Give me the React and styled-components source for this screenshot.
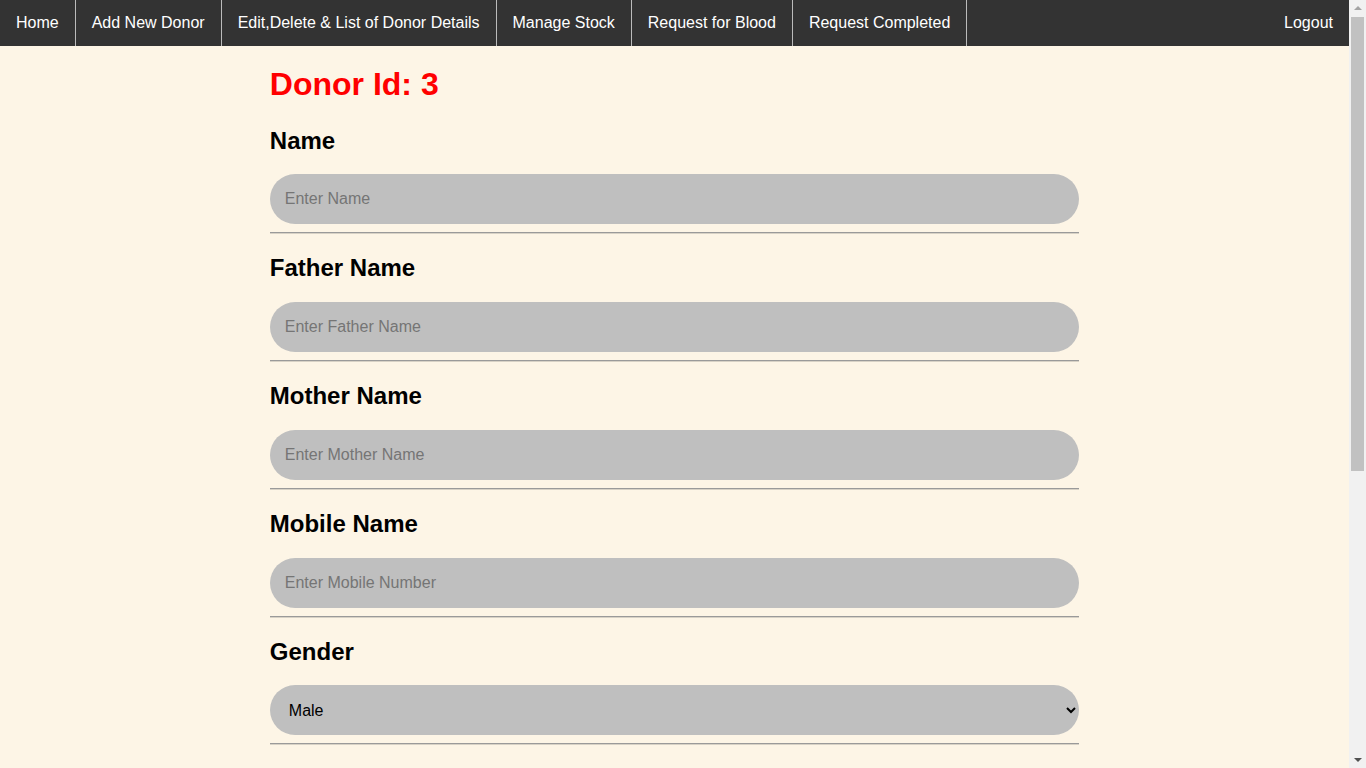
import React from "react";
import styled, { createGlobalStyle } from "styled-components";

const Global = createGlobalStyle`
  html, body { height: 100%; }
  body {
    margin: 0;
    background: #fdf5e6;
    font-family: "Liberation Sans", Arial, sans-serif;
    overflow: hidden;
  }
`;

const Shell = styled.div`
  display: flex;
  height: 100vh;
  overflow: hidden;
`;

const Page = styled.div`
  flex: 1;
  min-width: 0;
  overflow: hidden;
`;

const ScrollTrack = styled.div`
  width: 17px;
  flex: none;
  background: #f1f1f1;
  display: flex;
  flex-direction: column;
  align-items: center;
`;

const Arrow = styled.div`
  width: 0;
  height: 0;
  border-left: 4px solid transparent;
  border-right: 4px solid transparent;
  ${(p) =>
    p.$down
      ? "border-top: 4px solid #505050; margin-top: auto; margin-bottom: 6px;"
      : "border-bottom: 4px solid #a3a3a3; margin-top: 6px;"}
`;

const Thumb = styled.div`
  width: 13px;
  height: 454px;
  margin-top: 7px;
  background: #c1c1c1;
`;

const Nav = styled.ul`
  list-style: none;
  margin: 0;
  padding: 0;
  display: flex;
  background: #333;
`;

const NavItem = styled.li`
  border-right: ${(p) => (p.$right ? "none" : "1px solid #bbb")};
  margin-left: ${(p) => (p.$right ? "auto" : "0")};
`;

const NavLink = styled.a`
  display: block;
  color: white;
  text-decoration: none;
  font-size: 16px;
  line-height: 18px;
  padding: 14px 16px;
`;

const Main = styled.div`
  width: 60%;
  margin: 0 auto;
  padding-bottom: 20px;
`;

const Title = styled.h1`
  color: red;
  font-size: 32px;
  font-weight: bold;
  margin: 20px 0 23.5px;
`;

const Label = styled.h2`
  font-size: 24px;
  font-weight: bold;
  margin: 19.875px 0;
`;

const Field = styled.input`
  display: block;
  box-sizing: border-box;
  width: 100%;
  height: 50px;
  border: none;
  border-radius: 25px;
  background: #bfbfbf;
  padding: 0 15px;
  font-family: "Liberation Sans", Arial, sans-serif;
  font-size: 16px;
  outline: none;
  &::placeholder { color: #757575; }
`;

const Choice = styled.select`
  display: block;
  box-sizing: border-box;
  width: 100%;
  height: 50px;
  border: none;
  border-radius: 25px;
  background: #bfbfbf;
  padding: 0 15px;
  font-family: "Liberation Sans", Arial, sans-serif;
  font-size: 16px;
  color: black;
  outline: none;
`;

const Rule = styled.hr`
  margin: 8px 0;
  border: none;
  border-top: 1px solid #9a9a9a;
  border-bottom: 1px solid #d8d2c6;
`;

const links = [
  "Home",
  "Add New Donor",
  "Edit,Delete & List of Donor Details",
  "Manage Stock",
  "Request for Blood",
  "Request Completed",
];

const fields = [
  { label: "Name", ph: "Enter Name" },
  { label: "Father Name", ph: "Enter Father Name" },
  { label: "Mother Name", ph: "Enter Mother Name" },
  { label: "Mobile Name", ph: "Enter Mobile Number" },
];

export default function App() {
  return (
    <Shell>
      <Global />
      <Page>
        <Nav>
          {links.map((l) => (
            <NavItem key={l}>
              <NavLink href="#">{l}</NavLink>
            </NavItem>
          ))}
          <NavItem $right>
            <NavLink href="#">Logout</NavLink>
          </NavItem>
        </Nav>
        <Main>
          <Title>Donor Id: 3</Title>
          {fields.map((f) => (
            <div key={f.label}>
              <Label>{f.label}</Label>
              <Field placeholder={f.ph} />
              <Rule />
            </div>
          ))}
          <Label>Gender</Label>
          <Choice defaultValue="Male">
            <option>Male</option>
            <option>Female</option>
            <option>Other</option>
          </Choice>
          <Rule />
        </Main>
      </Page>
      <ScrollTrack>
        <Arrow />
        <Thumb />
        <Arrow $down />
      </ScrollTrack>
    </Shell>
  );
}
